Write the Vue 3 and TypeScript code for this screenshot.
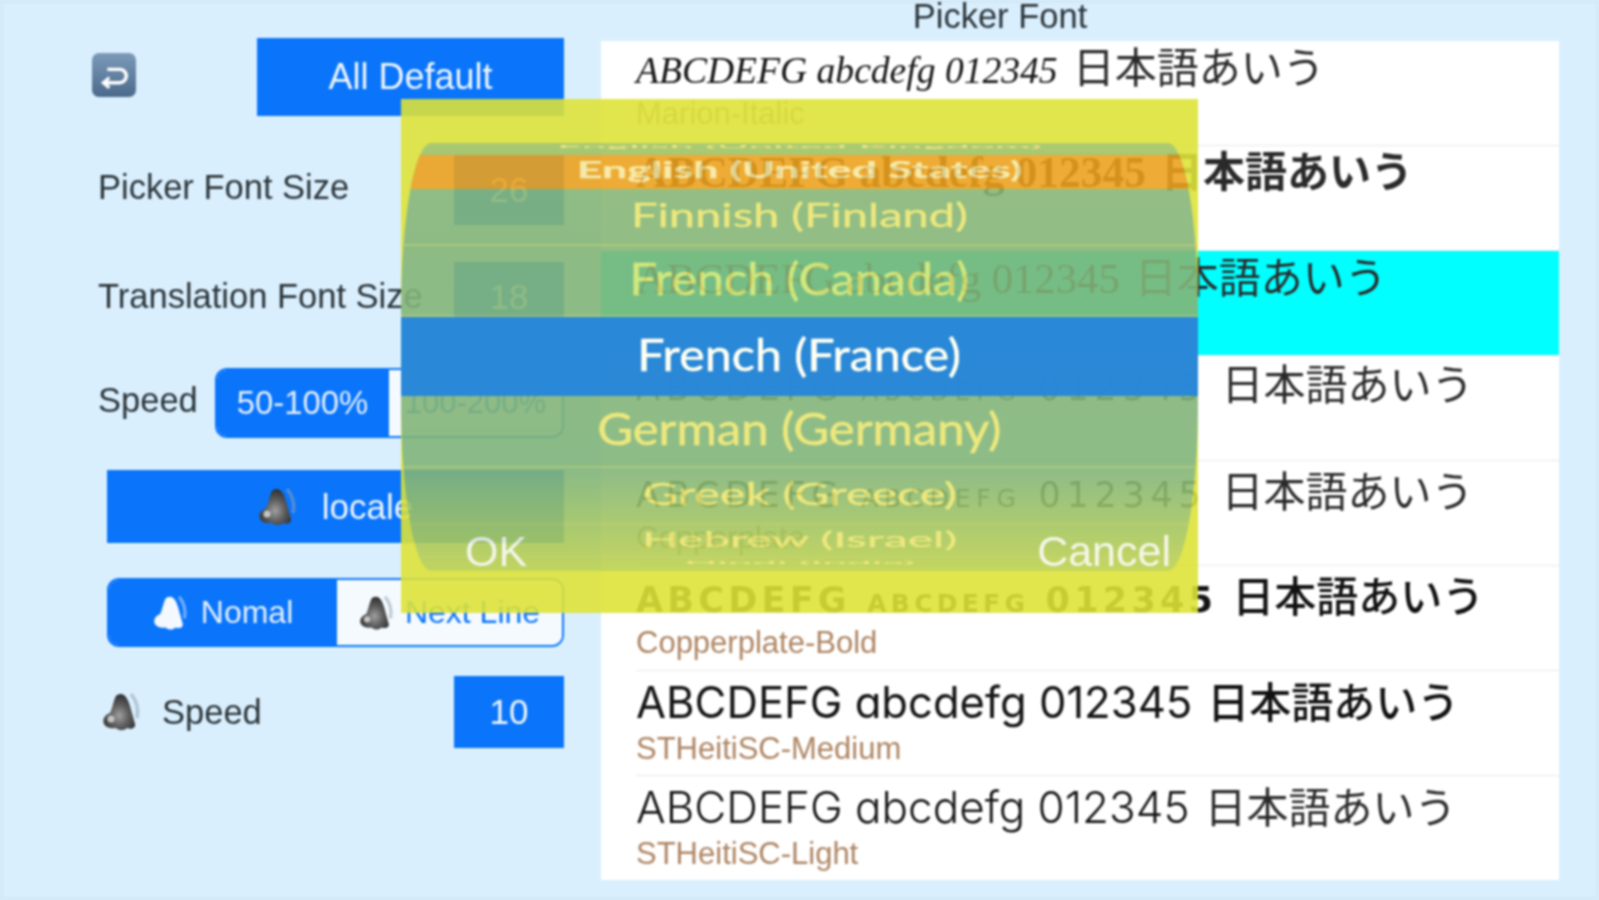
<script setup lang="ts">
interface FontRow {
  latin: string
  name?: string
  cls: string
  pad: number
  selected?: boolean
}

const sample = 'ABCDEFG abcdefg 012345'
const rows: FontRow[] = [
  { latin: sample, name: 'Marion-Italic', cls: 'f-italic', pad: 5 },
  { latin: sample, cls: 'f-bold', pad: 4 },
  { latin: sample, cls: 'f-didone', pad: 5, selected: true },
  { latin: sample, cls: 'f-plate-light', pad: 7 },
  { latin: sample, name: 'Copperplate', cls: 'f-plate', pad: 9 },
  { latin: sample, name: 'Copperplate-Bold', cls: 'f-plate-bold', pad: 9 },
  { latin: sample, name: 'STHeitiSC-Medium', cls: 'f-heiti-m', pad: 10 },
  { latin: sample, name: 'STHeitiSC-Light', cls: 'f-heiti-l', pad: 10 },
]

interface WheelRow {
  label: string
  h: number
  sx: number
  sy: number
  kind?: string
}

const wheel: WheelRow[] = [
  { label: 'English (United Kingdom)', h: 12, sx: 1, sy: 0.1, kind: 'edge' },
  { label: 'English (United States)', h: 34, sx: 1.02, sy: 0.5, kind: 'current' },
  { label: 'Finnish (Finland)', h: 57, sx: 1.07, sy: 0.75 },
  { label: 'French (Canada)', h: 71, sx: 1.1, sy: 1 },
  { label: '', h: 79, sx: 1, sy: 1, kind: 'slot' },
  { label: 'German (Germany)', h: 72, sx: 1.115, sy: 1 },
  { label: 'Greek (Greece)', h: 57, sx: 1.1, sy: 0.72 },
  { label: 'Hebrew (Israel)', h: 33, sx: 1.09, sy: 0.5 },
  { label: 'Hindi (India)', h: 13, sx: 1, sy: 0.1, kind: 'edge' },
]
</script>

<template>
  <div class="screen">
    <svg class="defs" width="0" height="0" aria-hidden="true">
      <defs>
        <radialGradient id="spk" cx="0.5" cy="0.6" r="0.6">
          <stop offset="0" stop-color="#a0a0a0" />
          <stop offset="0.5" stop-color="#5e5e5e" />
          <stop offset="1" stop-color="#2e2e2e" />
        </radialGradient>
        <symbol id="speaker-gray" viewBox="0 0 40 40">
          <path d="M29 2c5 6 8 14 6 24" fill="none" stroke="#8fa3b5" stroke-width="3.5" opacity=".55" />
          <path d="M19 2c4 0 7 5 9 12l5 18c1 4-4 6-8 4-3 3-8 3-11 0-4 1-10 0-12-4-2-5 1-9 6-11 2-4 3-10 5-15 1-3 3-4 6-4z" fill="url(#spk)" />
          <circle cx="9" cy="27" r="3.5" fill="#c4c4c4" />
        </symbol>
        <symbol id="speaker-white" viewBox="0 0 40 40">
          <path d="M29 2c5 6 8 14 6 24" fill="none" stroke="#9cc6ff" stroke-width="3.5" opacity=".7" />
          <path d="M19 2c4 0 7 5 9 12l5 18c1 4-4 6-8 4-3 3-8 3-11 0-4 1-10 0-12-4-2-5 1-9 6-11 2-4 3-10 5-15 1-3 3-4 6-4z" fill="#f4f8ff" />
        </symbol>
      </defs>
    </svg>

    <aside class="side">
      <div class="top">
        <div class="back">
          <svg width="44" height="44" viewBox="0 0 43 43">
            <path d="M15 16h12a6.5 6.5 0 0 1 0 13H12" fill="none" stroke="#fff" stroke-width="3.4" />
            <path d="M17 24l-6 5 6 5" fill="none" stroke="#fff" stroke-width="3" />
          </svg>
        </div>
        <button class="btn wide">All Default</button>
      </div>

      <div class="field f1">
        <span class="label">Picker Font Size</span>
        <span class="num">26</span>
      </div>
      <div class="field f2">
        <span class="label">Translation Font Size</span>
        <span class="num">18</span>
      </div>
      <div class="field f3">
        <span class="label">Speed</span>
        <div class="seg speed-seg">
          <span class="seg-on s-first">50-100%</span>
          <span class="seg-off">100-200%</span>
        </div>
      </div>
      <button class="btn locale">
        <svg class="spk" viewBox="0 0 40 40"><use href="#speaker-gray" /></svg>
        <span>locale</span>
      </button>
      <div class="seg mode">
        <span class="seg-on s-normal">
          <svg class="spk small" viewBox="0 0 40 40"><use href="#speaker-white" /></svg>
          Nomal
        </span>
        <span class="seg-off s-next">
          <svg class="spk small" viewBox="0 0 40 40"><use href="#speaker-gray" /></svg>
          Next Line
        </span>
      </div>
      <div class="field f6">
        <span class="label icon-label">
          <svg class="spk" viewBox="0 0 40 40"><use href="#speaker-gray" /></svg>
          Speed
        </span>
        <span class="num lift">10</span>
      </div>
    </aside>

    <main class="main">
      <h1 class="title">Picker Font</h1>
      <ul class="list">
        <li
          v-for="(r, i) in rows"
          :key="i"
          class="row"
          :class="{ on: r.selected }"
          :style="{ paddingTop: r.pad + 'px' }"
        >
          <div class="sample">
            <span class="latin" :class="r.cls">{{ r.latin }}</span>
            <span class="cjk" :class="r.cls + '-cjk'">日本語あいう</span>
          </div>
          <div v-if="r.name" class="name">{{ r.name }}</div>
        </li>
      </ul>
    </main>

    <div class="dialog">
      <div class="modal">
        <div class="wheel">
          <div
            v-for="(w, i) in wheel"
            :key="i"
            class="w-row"
            :class="w.kind"
            :style="{ height: w.h + 'px' }"
          >
            <span
              v-if="w.label"
              class="w-text"
              :style="{ transform: `translateY(-3px) scale(${w.sx}, ${w.sy})` }"
            >{{ w.label }}</span>
          </div>
        </div>
        <span class="action ok">OK</span>
        <span class="action cancel">Cancel</span>
      </div>
      <div class="band"><span class="w-text band-text">French (France)</span></div>
    </div>
  </div>
</template>

<style scoped>
.screen {
  position: relative;
  width: 1599px;
  height: 900px;
  display: flex;
  overflow: hidden;
  background: #daeffe;
  box-shadow: inset 0 0 0 3px #d4e9f8;
  font-family: "Liberation Sans", sans-serif;
  filter: blur(1px);
}
.defs { position: absolute; }
.side { width: 564px; flex: none; }
.top {
  display: flex;
  justify-content: space-between;
  align-items: center;
  margin-top: 38px;
  padding-left: 92px;
  height: 78px;
}
.back {
  width: 44px;
  height: 44px;
  border-radius: 7px;
  margin-top: -5px;
  background: linear-gradient(#7c9bba, #4b6a8b);
}
.back svg { display: block; }
.btn {
  display: flex;
  align-items: center;
  justify-content: center;
  border: 0;
  padding: 0;
  background: #0a75fb;
  color: #eef5ff;
  font: inherit;
}
.wide { width: 307px; height: 78px; font-size: 36px; }
.field {
  display: flex;
  align-items: center;
  justify-content: space-between;
  height: 70px;
  padding-left: 98px;
}
.f1 { margin-top: 39px; }
.f2 { margin-top: 37px; }
.f3 { margin-top: 36px; }
.f6 { margin-top: 29px; height: 72px; padding-left: 102px; }
.label {
  font-size: 34.5px;
  margin-bottom: 5px;
  color: #2a3338;
  white-space: nowrap;
}
.f2 .label { margin-bottom: 2px; }
.icon-label { display: flex; align-items: center; gap: 20px; margin-bottom: 0; }
.num {
  display: flex;
  align-items: center;
  justify-content: center;
  flex: none;
  width: 110px;
  height: 70px;
  background: #0a75fb;
  color: #eef5ff;
  font-size: 35px;
}
.lift { height: 72px; }
.seg {
  display: flex;
  border: 2px solid #0a75fb;
  border-radius: 12px;
  overflow: hidden;
  box-sizing: border-box;
}
.speed-seg { width: 349px; height: 70px; }
.seg-on, .seg-off {
  display: flex;
  align-items: center;
  justify-content: center;
  white-space: nowrap;
}
.seg-on { background: #0a75fb; color: #e4efff; }
.seg-off { background: #f4fafe; color: #0a75fb; flex: 1; }
.s-first { width: 171px; font-size: 32.8px; }
.speed-seg .seg-off { font-size: 31px; border-left: 1px solid #0a75fb; }
.locale {
  width: 457px;
  height: 73px;
  margin: 32px 0 0 107px;
  font-size: 35px;
  gap: 24px;
}
.spk { width: 40px; height: 40px; flex: none; }
.spk.small { width: 36px; height: 36px; }
.mode {
  width: 457px;
  height: 69px;
  margin: 35px 0 0 107px;
  font-size: 32px;
}
.s-normal { width: 228px; gap: 12px; }
.s-next { gap: 10px; }
.main {
  flex: 1;
  min-width: 0;
  padding: 0 40px 0 37px;
}
.title {
  margin: 0;
  height: 41px;
  padding-right: 160px;
  font-size: 34.5px;
  font-weight: 400;
  line-height: 32px;
  text-align: center;
  color: #2a3338;
}
.list {
  height: 839px;
  overflow: hidden;
  margin: 0;
  padding: 0;
  list-style: none;
  background: #fff;
}
.row {
  position: relative;
  box-sizing: border-box;
  height: 105px;
  padding-left: 35px;
  overflow: hidden;
}
.row::after {
  content: "";
  position: absolute;
  left: 35px;
  right: 0;
  bottom: 0;
  height: 1px;
  background: #e9e9e9;
}
.row.on { background: #00ffff; }
.sample {
  display: flex;
  align-items: baseline;
  gap: 15px;
  height: 50px;
  line-height: 38px;
  color: #141414;
  white-space: nowrap;
}
.cjk {
  font-family: "Noto Sans CJK JP", sans-serif;
  font-size: 42px;
  color: #2a2a2a;
}
.f-italic { font-family: "Liberation Serif", serif; font-style: italic; font-size: 37.6px; }
.f-bold { font-family: "Liberation Serif", serif; font-weight: 700; font-size: 43.5px; }
.f-didone { font-family: "Liberation Serif", serif; font-size: 42.7px; }
.f-plate-light, .f-plate, .f-plate-bold {
  font-family: "DejaVu Sans", sans-serif;
  font-variant: small-caps;
  font-size: 35px;
  letter-spacing: 5.75px;
}
.f-plate-bold { font-weight: 700; letter-spacing: 4.25px; }
.f-heiti-m, .f-heiti-l {
  font-family: Inter, sans-serif;
  font-feature-settings: "cv11" 1;
  font-size: 43.6px;
}
.f-heiti-l { font-weight: 300; font-size: 44px; }
.f-bold-cjk { font-weight: 700; }
.f-plate-bold-cjk, .f-heiti-m-cjk { font-weight: 500; color: #111; }
.name {
  font-size: 31px;
  line-height: 36px;
  color: #ae8563;
  white-space: nowrap;
}
.dialog {
  position: absolute;
  left: 401px;
  top: 99px;
  width: 797px;
  height: 514px;
}
.modal {
  height: 100%;
  padding-top: 44px;
  box-sizing: border-box;
  background: #dee338;
  opacity: 0.89;
}
.wheel {
  height: 428px;
  overflow: hidden;
  border-radius: 30px / 170px;
  background: linear-gradient(#a5c55f 0, #86b676 12%, #81b479 76%, #bed24c 100%);
}
.w-row {
  display: flex;
  align-items: center;
  justify-content: center;
  overflow: hidden;
  box-sizing: border-box;
  border-bottom: 2px solid rgba(190, 205, 100, 0.55);
}
.w-text {
  display: inline-block;
  flex: none;
  font-family: Lato, sans-serif;
  font-size: 44px;
  line-height: 1;
  color: #ebe66e;
  white-space: nowrap;
  -webkit-text-stroke: 0.5px currentColor;
}
.w-row.current { background: #eca11d; border: 0; }
.w-row.current .w-text { color: #f7e9a0; font-weight: 700; }
.w-row.slot { border: 0; }
.w-row.edge { border: 0; }
.band {
  position: absolute;
  left: 0;
  right: 0;
  top: 218px;
  height: 79px;
  display: flex;
  align-items: center;
  justify-content: center;
  background: rgba(38, 134, 218, 0.97);
}
.band-text {
  color: #fffff2;
  transform: translateY(-3px) scaleX(1.1);
}
.action {
  position: absolute;
  top: 429px;
  font-size: 43px;
  line-height: 46px;
  color: #f6f6e6;
}
.ok { left: 64px; }
.cancel { right: 27px; }
</style>

<style>
html, body { margin: 0; background: #daeffe; }
</style>
